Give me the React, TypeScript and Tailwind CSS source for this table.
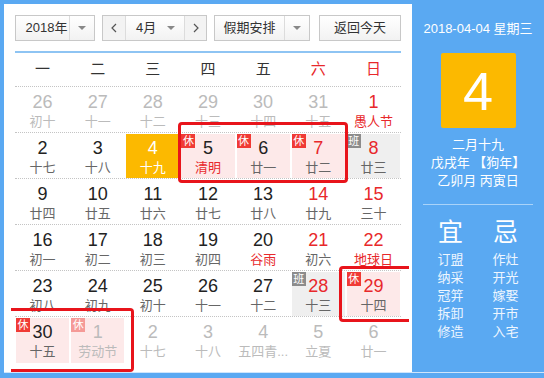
type Day = {
  n: number;
  l: string;
  dim?: boolean;
  red?: boolean;
  lred?: boolean;
  tag?: '休' | '班';
  today?: boolean;
};

const weekdays = ['一', '二', '三', '四', '五', '六', '日'];

const weeks: Day[][] = [
  [
    { n: 26, l: '初十', dim: true },
    { n: 27, l: '十一', dim: true },
    { n: 28, l: '十二', dim: true },
    { n: 29, l: '十三', dim: true },
    { n: 30, l: '十四', dim: true },
    { n: 31, l: '十五', dim: true },
    { n: 1, l: '愚人节', red: true, lred: true },
  ],
  [
    { n: 2, l: '十七' },
    { n: 3, l: '十八' },
    { n: 4, l: '十九', today: true },
    { n: 5, l: '清明', lred: true, tag: '休' },
    { n: 6, l: '廿一', tag: '休' },
    { n: 7, l: '廿二', red: true, tag: '休' },
    { n: 8, l: '廿三', red: true, tag: '班' },
  ],
  [
    { n: 9, l: '廿四' },
    { n: 10, l: '廿五' },
    { n: 11, l: '廿六' },
    { n: 12, l: '廿七' },
    { n: 13, l: '廿八' },
    { n: 14, l: '廿九', red: true },
    { n: 15, l: '三十', red: true },
  ],
  [
    { n: 16, l: '初一' },
    { n: 17, l: '初二' },
    { n: 18, l: '初三' },
    { n: 19, l: '初四' },
    { n: 20, l: '谷雨', lred: true },
    { n: 21, l: '初六', red: true },
    { n: 22, l: '地球日', red: true, lred: true },
  ],
  [
    { n: 23, l: '初八' },
    { n: 24, l: '初九' },
    { n: 25, l: '初十' },
    { n: 26, l: '十一' },
    { n: 27, l: '十二' },
    { n: 28, l: '十三', red: true, tag: '班' },
    { n: 29, l: '十四', red: true, tag: '休' },
  ],
  [
    { n: 30, l: '十五', tag: '休' },
    { n: 1, l: '劳动节', dim: true, tag: '休' },
    { n: 2, l: '十七', dim: true },
    { n: 3, l: '十八', dim: true },
    { n: 4, l: '五四青...', dim: true },
    { n: 5, l: '立夏', dim: true },
    { n: 6, l: '廿一', dim: true },
  ],
];

const yi = ['订盟', '纳采', '冠笄', '拆卸', '修造'];
const ji = ['作灶', '开光', '嫁娶', '开市', '入宅'];

function Caret() {
  return <span className="h-0 w-0 border-x-4 border-t-4 border-x-transparent border-t-[#888]" />;
}

function Chevron({ dir }: { dir: 'l' | 'r' }) {
  return (
    <svg width="6" height="10" viewBox="0 0 6 10">
      <polyline
        points={dir === 'l' ? '5,1 1,5 5,9' : '1,1 5,5 1,9'}
        fill="none"
        stroke="#555"
        strokeWidth="1.2"
      />
    </svg>
  );
}

function Cell({ d }: { d: Day }) {
  let bg = '';
  if (d.today) bg = 'bg-[#fcb900]';
  else if (d.tag === '休') bg = 'bg-[#fde9e9]';
  else if (d.tag === '班') bg = 'bg-[#efefef]';

  let num = 'text-[#222]';
  if (d.today) num = 'text-white';
  else if (d.dim) num = 'text-[#bbb]';
  else if (d.red) num = 'text-[#e8282b]';

  let lunar = 'text-[#666]';
  if (d.today) lunar = 'text-white';
  else if (d.dim) lunar = 'text-[#bbb]';
  else if (d.lred) lunar = 'text-[#e8282b]';

  let badge = 'bg-[#f03a35]';
  if (d.tag === '班') badge = 'bg-[#8c8c8c]';
  else if (d.dim) badge = 'bg-[#f59a97]';

  return (
    <div className={`relative mx-px mt-px flex flex-col items-center pt-[4px] ${bg}`}>
      {d.tag && (
        <span
          className={`absolute left-0 top-0 h-[14px] w-[14px] text-center text-[11px] leading-[14px] text-white ${badge}`}
        >
          {d.tag}
        </span>
      )}
      <span className={`text-[18px] leading-[20px] ${num}`}>{d.n}</span>
      <span className={`mt-[3px] whitespace-nowrap text-[13px] leading-[14px] ${lunar}`}>{d.l}</span>
    </div>
  );
}

export default function App() {
  return (
    <div className="relative flex h-[378px] w-[544px] bg-[#5aa9f2] pb-[5px] pl-[4px] pt-[4px] font-['Liberation_Sans','Noto_Sans_CJK_SC',sans-serif]">
      <div className="flex flex-1 border-b border-[#cfe5fb]">
        {/* calendar */}
        <div className="w-[408px] bg-white px-[11px] pt-[11px]">
          <div className="flex h-[26px] text-[13px] text-[#333]">
            <div className="flex w-[80px] border border-[#c8c8c8] bg-gradient-to-b from-white to-[#f2f2f2]">
              <div className="flex flex-1 items-center justify-center pl-[8px]">2018年</div>
              <div className="flex w-[25px] items-center justify-center border-l border-[#dcdcdc]">
                <Caret />
              </div>
            </div>
            <div className="ml-[7px] flex w-[105px] border border-[#c8c8c8] bg-gradient-to-b from-white to-[#f2f2f2]">
              <div className="flex w-[23px] items-center justify-center border-r border-[#dcdcdc] bg-[#f3f3f3]">
                <Chevron dir="l" />
              </div>
              <div className="flex flex-1 items-center pl-[10px] pr-[9px]">
                <span>4月</span>
                <span className="ml-auto flex">
                  <Caret />
                </span>
              </div>
              <div className="flex w-[22px] items-center justify-center border-l border-[#dcdcdc] bg-[#f3f3f3]">
                <Chevron dir="r" />
              </div>
            </div>
            <div className="ml-[7px] flex w-[96px] border border-[#c8c8c8] bg-gradient-to-b from-white to-[#f2f2f2]">
              <div className="flex flex-1 items-center justify-center">假期安排</div>
              <div className="flex w-[25px] items-center justify-center border-l border-[#dcdcdc]">
                <Caret />
              </div>
            </div>
            <div className="ml-[9px] flex w-[82px] items-center justify-center border border-[#c8c8c8] bg-gradient-to-b from-white to-[#f2f2f2]">
              返回今天
            </div>
          </div>

          <div className="mt-[10px] border-t-2 border-[#8ec4f3]" />

          <div className="grid h-[34px] grid-cols-7 border-b border-dotted border-[#c4c4c4] text-[15px]">
            {weekdays.map((w, i) => (
              <div
                key={w}
                className={`flex items-center justify-center ${i >= 5 ? 'text-[#e8282b]' : 'text-[#333]'}`}
              >
                {w}
              </div>
            ))}
          </div>

          {weeks.map((wk, i) => (
            <div
              key={i}
              className={`grid h-[46px] grid-cols-7 ${i < 5 ? 'border-b border-dotted border-[#c4c4c4]' : ''}`}
            >
              {wk.map((d, j) => (
                <Cell key={j} d={d} />
              ))}
            </div>
          ))}
        </div>

        {/* day detail */}
        <div className="flex flex-1 flex-col items-center pt-[16px] text-white">
          <div className="text-[13px] leading-[18px]">2018-04-04 星期三</div>
          <div className="mt-[15px] flex h-[75px] w-[75px] items-center justify-center rounded-[2px] bg-[#fcb900] text-[54px] leading-none">
            4
          </div>
          <div className="mt-[8px] flex flex-col items-center text-[13px] leading-[18px]">
            <span>二月十九</span>
            <span>戊戌年 【狗年】</span>
            <span>乙卯月 丙寅日</span>
          </div>
          <div className="mt-[14px] h-px w-[110px] bg-[#a9d3f9]" />
          <div className="mt-[12px] grid w-[110px] grid-cols-2 text-center">
            <span className="text-[25px] leading-[30px]">宜</span>
            <span className="text-[25px] leading-[30px]">忌</span>
            <div className="mt-[4px] flex flex-col text-[13px] leading-[18px] text-[#eef6ff]">
              {yi.map((t) => (
                <span key={t}>{t}</span>
              ))}
            </div>
            <div className="mt-[4px] flex flex-col text-[13px] leading-[18px] text-[#eef6ff]">
              {ji.map((t) => (
                <span key={t}>{t}</span>
              ))}
            </div>
          </div>
        </div>
      </div>

      {/* hand-drawn highlight marks */}
      <div className="absolute left-[178px] top-[122px] h-[61px] w-[170px] rounded-[4px] border-[3px] border-[#e8141b]" />
      <div className="absolute left-[339px] top-[266px] h-[56px] w-[70px] rounded-l-[4px] border-y-[3px] border-l-[3px] border-[#e8141b]" />
      <div className="absolute left-[11px] top-[308px] h-[64px] w-[123px] rounded-r-[4px] border-y-[3px] border-r-[3px] border-[#e8141b]" />
    </div>
  );
}
